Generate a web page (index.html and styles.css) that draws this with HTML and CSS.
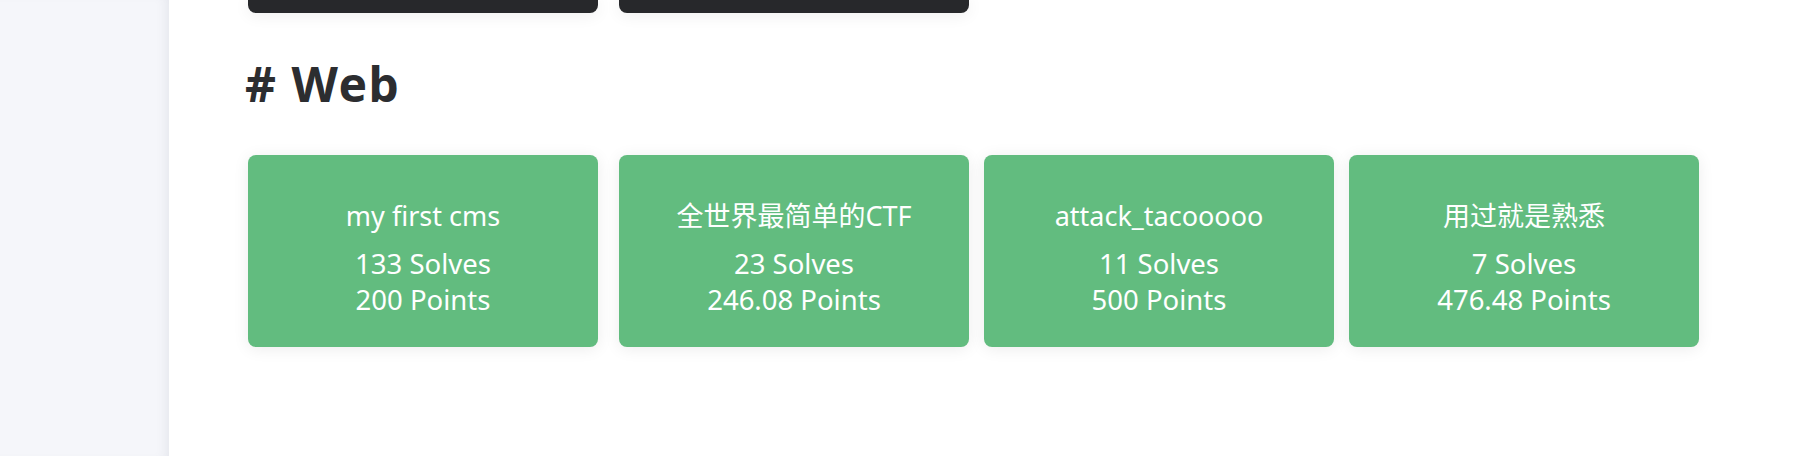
FILE: index.html
```html
<!DOCTYPE html>
<html lang="zh-CN">
<head>
<meta charset="utf-8">
<title>Challenges</title>
<link rel="stylesheet" href="styles.css">
</head>
<body>
<div class="layout">
  <aside class="sidebar"></aside>
  <main class="main">
    <div class="row dark-row">
      <div class="card dark"></div>
      <div class="card dark"></div>
    </div>
    <h1 class="category"># Web</h1>
    <div class="row">
      <div class="card chal">
        <div class="chal-name">my first cms</div>
        <div class="chal-meta">133 Solves</div>
        <div class="chal-meta">200 Points</div>
      </div>
      <div class="card chal">
        <div class="chal-name">全世界最简单的CTF</div>
        <div class="chal-meta">23 Solves</div>
        <div class="chal-meta">246.08 Points</div>
      </div>
      <div class="card chal">
        <div class="chal-name">attack_tacooooo</div>
        <div class="chal-meta">11 Solves</div>
        <div class="chal-meta">500 Points</div>
      </div>
      <div class="card chal">
        <div class="chal-name">用过就是熟悉</div>
        <div class="chal-meta">7 Solves</div>
        <div class="chal-meta">476.48 Points</div>
      </div>
    </div>
  </main>
</div>
</body>
</html>
```
FILE: styles.css
```css
html, body {
  margin: 0;
  padding: 0;
  height: 100%;
  background: #ffffff;
  font-family: "Noto Sans", "Noto Sans CJK SC", sans-serif;
}

.layout {
  display: flex;
  height: 100%;
}

.sidebar {
  width: 169px;
  flex: 0 0 169px;
  background: #f5f6fa;
  box-shadow: inset -10px 0 12px -8px rgba(40, 50, 90, 0.09);
}

.main {
  flex: 1;
  padding-left: 79px;
}

.row {
  display: flex;
  gap: 15px;
}

.row .card:first-child {
  margin-right: 6px;
}

.card {
  width: 350px;
  flex: 0 0 350px;
  border-radius: 8px;
  box-shadow: 0 2px 16px rgba(0, 0, 0, 0.08);
  box-sizing: border-box;
}

.dark {
  height: 13px;
  background: #27282b;
  border-radius: 0 0 8px 8px;
}

.category {
  margin: 43px 0 43px -3px;
  font-size: 48px;
  line-height: 56px;
  font-weight: 700;
  letter-spacing: 1.5px;
  color: #2c2d30;
}

.chal {
  height: 192px;
  background: #62bc7f;
  color: #ffffff;
  text-align: center;
  padding: 42.5px 10px 0;
}

.chal-name {
  font-size: 27px;
  line-height: 36px;
  margin-bottom: 12.5px;
  white-space: nowrap;
}

.chal-meta {
  font-size: 27.5px;
  line-height: 36px;
}
```
